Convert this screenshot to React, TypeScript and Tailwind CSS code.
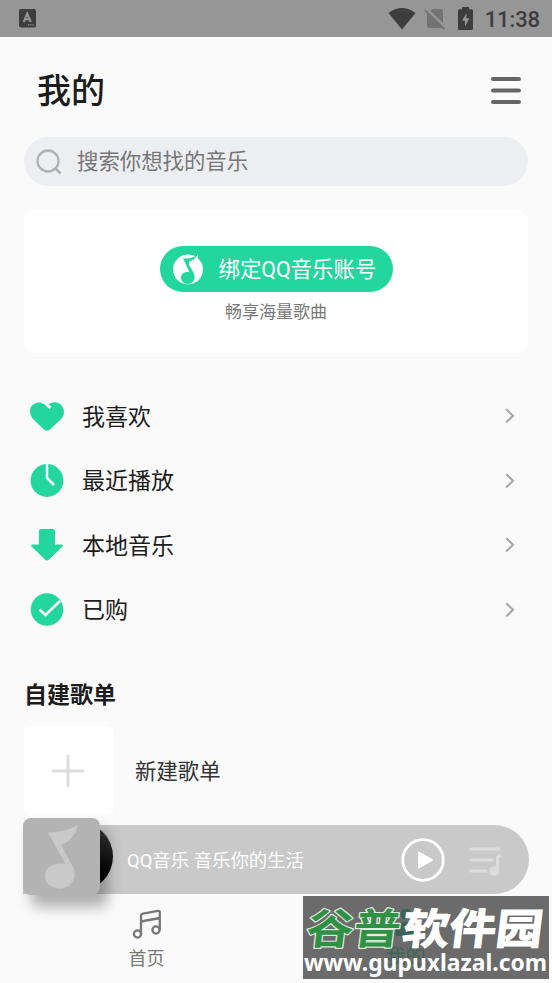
import React from 'react';

function StatusBar() {
  return (
    <div className="flex h-[37px] shrink-0 items-center justify-between bg-[#969696] pl-[19px] pr-[12px] text-[#3d3d3d]">
      <svg width="17" height="19" viewBox="0 0 17 19">
        <rect width="17" height="18.5" rx="2" fill="#3d3d3d" />
        <path d="M4.7 13 L8.2 4.5 L11.8 13 M6 10.3 H10.6" fill="none" stroke="#969696" strokeWidth="2" />
        <path d="M9 15.8 H15" stroke="#969696" strokeWidth="1.2" strokeDasharray="1.4 0.8" />
      </svg>
      <div className="flex items-center">
        <svg width="28" height="22" viewBox="0 0 28 22" className="mr-[8px]">
          <path d="M0.5 5 Q14 -5 27.5 5 L14 21.5 Z" fill="#3d3d3d" />
        </svg>
        <svg width="22" height="22" viewBox="0 0 22 22" className="mr-[12px]">
          <path d="M8 1 H17 Q19 1 19 3 V20 H5 Q3 20 3 18 V6 Z" fill="#737373" />
          <path d="M1.5 0.5 L21.5 20" stroke="#969696" strokeWidth="3.5" />
          <path d="M0.7 2 L20.5 21.3" stroke="#737373" strokeWidth="2" />
        </svg>
        <svg width="15" height="23" viewBox="0 0 15 23" className="mr-[12px]">
          <path d="M4 0 H11 V2.2 H13.5 Q15 2.2 15 3.7 V21.5 Q15 23 13.5 23 H1.5 Q0 23 0 21.5 V3.7 Q0 2.2 1.5 2.2 H4 Z" fill="#3d3d3d" />
          <path d="M8.7 6 L4 13.8 H7 V19.5 L11.3 11.2 H8.2 Z" fill="#969696" />
        </svg>
        <span className="pt-[2px] text-[22px] font-medium leading-[35px] tracking-[-0.1px]">11:38</span>
      </div>
    </div>
  );
}

function HeartIcon() {
  return (
    <svg width="36" height="34" viewBox="0 0 36 34">
      <path d="M1 12 C1 5 9 1 15 5 L20.5 10 L22.5 7.5 L19.5 5.5 C26 0 35 5 35 13 C35 17 33 19 30 22 L21 30.5 Q18 33 15 30.5 L5 21 C2 18 1 15 1 12 Z" fill="#23d69e" />
    </svg>
  );
}

function ClockIcon() {
  return (
    <svg width="36" height="34" viewBox="0 0 36 34">
      <circle cx="18" cy="16.5" r="16.4" fill="#23d69e" />
      <path d="M18 0 V14 L25 21" fill="none" stroke="#fafafa" strokeWidth="2.5" />
    </svg>
  );
}

function DownIcon() {
  return (
    <svg width="36" height="34" viewBox="0 0 36 34">
      <path d="M10 3 Q10 1 12 1 H24 Q26 1 26 3 V16.5 H32.5 Q35 17 33 19 L20 31.5 Q18 33.5 16 31.5 L3 19 Q1 17 3.5 16.5 H10 Z" fill="#23d69e" />
    </svg>
  );
}

function PaidIcon() {
  return (
    <svg width="36" height="34" viewBox="0 0 36 34">
      <circle cx="18" cy="16.5" r="16.2" fill="#23d69e" />
      <path d="M10.5 16.5 L16.5 22 L31 8" fill="none" stroke="#fafafa" strokeWidth="2.5" />
    </svg>
  );
}

const rows = [
  { label: '我喜欢', icon: <HeartIcon /> },
  { label: '最近播放', icon: <ClockIcon /> },
  { label: '本地音乐', icon: <DownIcon /> },
  { label: '已购', icon: <PaidIcon /> },
];

function PlayerBar() {
  return (
    <div className="relative mx-[23px] mt-[10px] flex h-[69px] shrink-0 items-center rounded-r-full bg-[#c9c9c9] pl-[104px] pr-[26px]">
      {/* record peeking out behind the cover */}
      <div className="absolute -top-[3px] left-[21px] h-[69px] w-[69px] rounded-full bg-linear-to-b from-[#444] via-[#181818] to-black"></div>
      <div className="absolute -top-[7px] left-0 h-[77px] w-[77px] rounded-[8px] bg-[#b3b3b3] shadow-[8px_12px_14px_rgba(0,0,0,0.3)]">
        <svg width="77" height="77" viewBox="0 0 77 77">
          <path d="M25 14.5 C37 14 48 12 55 6.5 C53 16 48 23 38 27 L50 49 C55 61 47 70.5 37 70.5 C28 70.5 22 65 22 58 C22 50 30 43.5 42.5 46 Z" fill="#c9c9c9" />
        </svg>
      </div>
      <span className="flex-1 pt-[3px] text-[18.4px] leading-[24px] text-white">QQ音乐 音乐你的生活</span>
      <svg width="44" height="44" viewBox="0 0 44 44" className="mr-[24px]">
        <circle cx="22" cy="22" r="20.3" fill="none" stroke="#fff" strokeWidth="2.8" />
        <path d="M18 14.5 L31 22 L18 29.5 Z" fill="#fff" stroke="#fff" strokeWidth="2" strokeLinejoin="round" />
      </svg>
      <svg width="34" height="30" viewBox="0 0 34 30" className="mt-[3px]">
        <path d="M2 3 H30 M2 14 H23 M2 25 H17" stroke="#dcdcdc" strokeWidth="3" strokeLinecap="round" />
        <circle cx="25.5" cy="25" r="4.8" fill="#dcdcdc" />
        <path d="M28.5 25 V13 Q28.5 10 32 9" fill="none" stroke="#dcdcdc" strokeWidth="3" />
      </svg>
    </div>
  );
}

function Watermark() {
  return (
    <div className="absolute bottom-[4px] right-[3px] h-[83px] w-[246px] bg-[#434343]/78">
      <svg width="246" height="83" viewBox="0 0 246 83">
        <g transform="skewX(-7)" fontWeight="700" fontSize="42">
          <text x="8" y="48" textLength="94" lengthAdjust="spacingAndGlyphs" fill="#2f9145" stroke="#dfeadf" strokeWidth="2.4" strokeLinejoin="round" paintOrder="stroke">谷普</text>
          <text x="104" y="48" textLength="140" lengthAdjust="spacingAndGlyphs" fill="#fff" stroke="#fff" strokeWidth="1.2">软件园</text>
        </g>
        <text x="1" y="75" textLength="243" lengthAdjust="spacingAndGlyphs" fontSize="23" fontWeight="700" fill="#fff" className="font-['Noto_Sans',sans-serif]">www.gupuxlazal.com</text>
      </svg>
    </div>
  );
}

export default function App() {
  return (
    <div className="relative flex h-[983px] w-[552px] flex-col overflow-hidden bg-[#fafafa] font-['Roboto','Noto_Sans_CJK_SC',sans-serif] text-[#1c1c1c]">
      <StatusBar />

      <header className="flex h-[100px] shrink-0 items-center justify-between pl-[37px] pr-[30px]">
        <h1 className="pt-[7px] text-[34px] font-medium leading-[50px]">我的</h1>
        <svg width="32" height="28" viewBox="0 0 32 28" className="mt-[7px]">
          <path d="M3 2 H29 M3 13.5 H29 M3 25 H29" stroke="#666" strokeWidth="4" strokeLinecap="round" />
        </svg>
      </header>

      <div className="mx-[24px] flex h-[49px] shrink-0 items-center rounded-full bg-[#edeef2] pl-[12px]">
        <svg width="26" height="26" viewBox="0 0 26 26" className="mr-[15px]">
          <circle cx="12" cy="12" r="10.5" fill="none" stroke="#b0b0b2" strokeWidth="2.3" />
          <path d="M19.5 19.5 L24.5 24.5" stroke="#b0b0b2" strokeWidth="2.5" />
        </svg>
        <span className="pt-[2px] text-[21.4px] text-[#777]">搜索你想找的音乐</span>
      </div>

      <section className="mx-[24px] mt-[24px] flex h-[143px] shrink-0 flex-col items-center rounded-[12px] bg-white pt-[36px]">
        <button className="flex h-[46px] w-[233px] items-center rounded-full bg-[#23d69e] pl-[13px] text-white">
          <svg width="31" height="31" viewBox="0 0 31 31" className="mr-[15px]">
            <circle cx="15" cy="15.5" r="15" fill="#fff" />
            <path d="M10 4 C15 5.5 20 4 24 1 C23 6 20 9 15.5 10 L20.5 18.5 C24 26 19 30 15 30 C11 30 8 27 8 24 C8 19 13 17 16.5 18.5 Z" fill="#23d69e" />
            <path d="M16 7.5 Q21 6.5 25 0.5 Q25.5 6 22 9 Q19 11 16 10.5 Z" fill="#fff" />
          </svg>
          <span className="pt-[3px] text-[21.4px]">绑定QQ音乐账号</span>
        </button>
        <p className="mt-[8px] text-[17px] leading-[24px] text-[#777]">畅享海量歌曲</p>
      </section>

      <ul className="mt-[31px] shrink-0">
        {rows.map((row) => (
          <li key={row.label} className="flex h-[64.5px] items-center pl-[29px] pr-[37px]">
            {row.icon}
            <span className="ml-[17px] flex-1 pt-[3px] text-[23px]">{row.label}</span>
            <svg width="10" height="16" viewBox="0 0 10 16">
              <path d="M1.8 1.8 L8 7.8 L1.8 13.8" fill="none" stroke="#aaa" strokeWidth="2.2" strokeLinecap="round" />
            </svg>
          </li>
        ))}
      </ul>

      <h2 className="mt-[37px] h-[34px] shrink-0 pl-[24px] text-[23px] font-bold leading-[34px]">自建歌单</h2>
      <div className="mt-[13px] flex h-[89px] shrink-0 items-center pl-[24px]">
        <div className="flex h-[89px] w-[89px] items-center justify-center rounded-[6px] bg-white pr-[1px]">
          <svg width="34" height="34" viewBox="0 0 34 34">
            <path d="M17 2 V32 M2 17 H32" stroke="#dcdcdc" strokeWidth="3" strokeLinecap="round" />
          </svg>
        </div>
        <span className="ml-[22px] pt-[4px] text-[21.4px] text-[#333]">新建歌单</span>
      </div>

      <PlayerBar />

      <nav className="flex flex-1 pt-[15px]">
        <div className="ml-[17px] flex w-[259px] flex-col items-center">
          <svg width="30" height="30" viewBox="0 0 30 30" fill="none" stroke="#777" strokeWidth="2.3">
            <circle cx="5.5" cy="25" r="3.6" />
            <circle cx="24" cy="21" r="3.6" />
            <path d="M9 25 V7 Q9 5 11 4.5 L26 1.8 Q27.8 1.6 27.8 3.5 V21 M9 12.5 L27.8 9" />
          </svg>
          <span className="mt-[7px] text-[18px] leading-[26px] text-[#777]">首页</span>
        </div>
        <div className="flex w-[259px] flex-col items-center text-[#23d69e]">
          <svg width="30" height="30" viewBox="0 0 30 30" fill="currentColor">
            <circle cx="15" cy="5" r="5.5" />
            <path d="M4 25 Q5 13 15 13 Q25 13 26 25 Q26 27 24 27 H6 Q4 27 4 25 Z" />
          </svg>
          <span className="mt-[5px] text-[20px] leading-[26px]">我的</span>
        </div>
      </nav>
      <Watermark />
    </div>
  );
}
